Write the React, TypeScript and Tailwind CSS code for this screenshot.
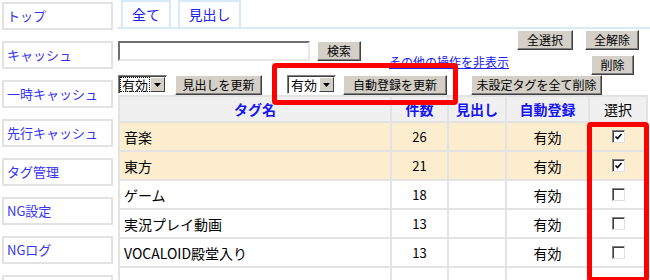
import React from "react";

const F = { fontFamily: '"Noto Sans CJK JP", "Noto Sans", sans-serif' };

function Btn({ children, w }: { children: React.ReactNode; w: string }) {
  return (
    <div
      className={`${w} h-[20px] flex items-center justify-center bg-[#d4d0c8] border border-t-white border-l-white border-r-[#404040] border-b-[#404040] text-[12px] leading-none text-black shadow-[inset_-1px_-1px_0_#808080]`}
    >
      {children}
    </div>
  );
}

function Sel({ focus }: { focus?: boolean }) {
  return (
    <div className="h-[19px] w-[49px] flex items-stretch border border-t-[#808080] border-l-[#808080] border-r-white border-b-white shadow-[inset_1px_1px_0_#404040] bg-white">
      <div className="flex-1 flex items-center pl-[2px]">
        <span className={`text-[13px] leading-none px-[1px] ${focus ? "outline outline-1 outline-dotted outline-black" : ""}`}>有効</span>
      </div>
      <div className="w-[15px] my-[1px] mr-[1px] bg-[#d4d0c8] border border-t-white border-l-white border-r-[#404040] border-b-[#404040] flex items-center justify-center">
        <svg width="7" height="4" viewBox="0 0 7 4"><path d="M0 0h7L3.5 4z" fill="#000" /></svg>
      </div>
    </div>
  );
}

function Check({ on }: { on?: boolean }) {
  return (
    <div className="w-[13px] h-[13px] bg-white border border-t-[#808080] border-l-[#808080] border-r-[#e0e0e0] border-b-[#e0e0e0] shadow-[inset_1px_1px_0_#404040] flex items-center justify-center">
      {on && (
        <svg width="9" height="9" viewBox="0 0 9 9"><path d="M1.5 4.5l2 2 4-4.5" stroke="#000" strokeWidth="1.6" fill="none" /></svg>
      )}
    </div>
  );
}

const rows = [
  { name: "音楽", n: "26", on: true },
  { name: "東方", n: "21", on: true },
  { name: "ゲーム", n: "18", on: false },
  { name: "実況プレイ動画", n: "13", on: false },
  { name: "VOCALOID殿堂入り", n: "13", on: false },
  { name: "", n: "", on: false },
];

export default function App() {
  const side = ["トップ", "キャッシュ", "一時キャッシュ", "先行キャッシュ", "タグ管理", "NG設定", "NGログ", ""];
  return (
    <div className="relative w-[650px] h-[280px] overflow-hidden bg-white flex" style={F}>
      <div className="w-[117px] shrink-0 pl-[2px] pt-[2px] flex flex-col gap-[11px]">
        {side.map((s, i) => (
          <div key={i} className="w-[111px] h-[28px] shrink-0 border-2 border-[#e2e2e2] flex items-center pl-[3px] text-[13px] text-[#3434f6]">
            {s}
          </div>
        ))}
      </div>
      <div className="flex-1 flex flex-col">
        <div className="h-[29px] border-b-2 border-[#d6ebf7] flex items-end gap-[7px] pl-[4px]">
          <div className="w-[50px] h-[27px] border-2 border-b-0 border-[#d6ebf7] flex items-center justify-center text-[14px] text-[#2020f0]">全て</div>
          <div className="w-[63px] h-[27px] border-2 border-b-0 border-[#d6ebf7] flex items-center justify-center text-[14px] text-[#2020f0]">見出し</div>
        </div>
        <div className="h-[44px] flex">
          <div className="flex pt-[12px] pl-[1px] gap-[7px] items-start shrink-0">
            <div className="w-[192px] h-[20px] bg-white border-2 border-t-[#707070] border-l-[#707070] border-r-[#e8e8e8] border-b-[#e8e8e8]" />
            <Btn w="w-[44px]">検索</Btn>
          </div>
          <div className="pl-[28px] pt-[27px] text-[12px] leading-none text-[#2020f0] underline whitespace-nowrap shrink-0">その他の操作を非表示</div>
          <div className="ml-auto mr-[11px] pt-[1px] flex flex-col items-end gap-[5px] shrink-0">
            <div className="flex gap-[12px]">
              <Btn w="w-[56px]">全選択</Btn>
              <Btn w="w-[54px]">全解除</Btn>
            </div>
            <div className="mr-[5px]">
              <Btn w="w-[43px]">削除</Btn>
            </div>
          </div>
        </div>
        <div className="h-[27px] flex items-start pl-[1px] pt-[2px]">
          <Sel focus />
          <div className="ml-[8px]"><Btn w="w-[87px]">見出しを更新</Btn></div>
          <div className="ml-[25px]"><Sel /></div>
          <div className="ml-[7px]"><Btn w="w-[104px]">自動登録を更新</Btn></div>
          <div className="ml-[24px]"><Btn w="w-[131px]">未設定タグを全て削除</Btn></div>
        </div>
        <div className="ml-[1px] w-[530px] grid grid-cols-[270px_55px_56px_81px_56px] gap-[2px] p-[2px] bg-[#e3e3e3] text-[14px] leading-none">
          <div className="h-[24px] bg-[#f0f0f0] flex items-center justify-center font-bold text-[#1515f0]">タグ名</div>
          <div className="h-[24px] bg-[#f0f0f0] flex items-center justify-center font-bold text-[#1515f0]">件数</div>
          <div className="h-[24px] bg-[#f0f0f0] flex items-center justify-center font-bold text-[#1515f0]">見出し</div>
          <div className="h-[24px] bg-[#f0f0f0] flex items-center justify-center font-bold text-[#1515f0]">自動登録</div>
          <div className="h-[24px] bg-[#f0f0f0] flex items-center justify-center text-black">選択</div>
          {rows.map((r, i) => {
            const bg = r.on ? "bg-[#fdedcf]" : "bg-white";
            return (
              <React.Fragment key={i}>
                <div className={`h-[27px] ${bg} flex items-center pl-[4px] text-black`}>{r.name}</div>
                <div className={`h-[27px] ${bg} flex items-center justify-center text-[13px] text-black`}>{r.n}</div>
                <div className={`h-[27px] ${bg}`} />
                <div className={`h-[27px] ${bg} flex items-center justify-center text-black`}>{r.name ? "有効" : ""}</div>
                <div className={`h-[27px] ${bg} flex items-center justify-center`}>{r.name && <Check on={r.on} />}</div>
              </React.Fragment>
            );
          })}
        </div>
      </div>
      <div className="absolute left-[272px] top-[63px] w-[186px] h-[42px] border-[5px] border-[#ff0000] rounded-[4px]" />
      <div className="absolute left-[587px] top-[122px] w-[62px] h-[160px] border-[5px] border-[#ff0000] rounded-[4px]" />
    </div>
  );
}
